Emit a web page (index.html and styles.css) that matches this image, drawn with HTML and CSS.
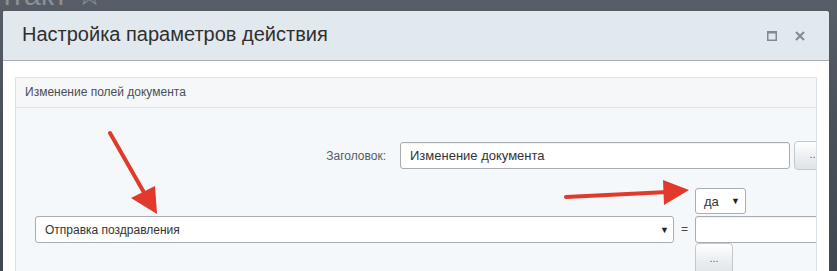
FILE: index.html
```html
<!DOCTYPE html>
<html lang="ru">
<head>
<meta charset="utf-8">
<title>Настройка параметров действия</title>
<link rel="stylesheet" href="styles.css">
</head>
<body>
<div class="backdrop"><span class="backdrop-text">нтакт ☆</span></div>
<div class="dialog">
  <div class="dialog-head">
    <div class="dialog-title">Настройка параметров действия</div>
    <div class="dialog-icons">
      <svg class="ico" width="10" height="10" viewBox="0 0 10 10"><rect x="0.75" y="0.75" width="8.5" height="8.5" fill="none" stroke="#7f8a95" stroke-width="1.5"/><line x1="0" y1="1.2" x2="10" y2="1.2" stroke="#7f8a95" stroke-width="2.4"/></svg>
      <svg class="ico" width="10" height="10" viewBox="0 0 10 10"><path d="M1 1 L9 9 M9 1 L1 9" stroke="#7f8a95" stroke-width="2" fill="none"/></svg>
    </div>
  </div>
  <div class="dialog-body">
    <div class="panel">
      <div class="panel-head">Изменение полей документа</div>
      <div class="panel-body">
        <div class="row1">
          <div class="label">Заголовок:</div>
          <div class="input wide">Изменение документа</div>
          <div class="btn btn-row1">...</div>
        </div>
        <div class="row2">
          <div class="select main"><span>Отправка поздравления</span><span class="caret">▼</span></div>
          <div class="eq">=</div>
          <div class="valcol">
            <div class="select small"><span>да</span><span class="caret">▼</span></div>
            <div class="input val"></div>
            <div class="btn btn-val">...</div>
          </div>
        </div>
      </div>
    </div>
  </div>
</div>
<svg class="arrows" width="837" height="271" viewBox="0 0 837 271">
  <line x1="110" y1="133" x2="146" y2="196" stroke="#e2392d" stroke-width="4" stroke-linecap="round"/>
  <polygon points="157,214 131,198 155,186" fill="#e2392d"/>
  <line x1="566" y1="197" x2="668" y2="192" stroke="#e2392d" stroke-width="4" stroke-linecap="round"/>
  <polygon points="689,190 663,180 664,205" fill="#e2392d"/>
</svg>
</body>
</html>
```
FILE: styles.css
```css
html, body {
  margin: 0;
  padding: 0;
}
body {
  width: 837px;
  height: 271px;
  overflow: hidden;
  background: linear-gradient(180deg, #585e67 0%, #4b525b 40%, #3f4750 100%);
  font-family: "Liberation Sans", Arial, sans-serif;
  position: relative;
}
.backdrop {
  height: 11px;
  overflow: hidden;
}
.backdrop-text {
  display: block;
  margin-top: -22px;
  margin-left: -6px;
  font-size: 30px;
  line-height: 34px;
  color: #8a9096;
  font-weight: 300;
}
.dialog {
  margin-left: 3px;
  width: 826px;
  height: 260px;
  background: #fff;
  border-radius: 2px 3px 0 0;
  overflow: hidden;
}
.dialog-head {
  height: 49px;
  background: #e2e9ee;
  border-bottom: 1px solid #a9afb4;
  display: flex;
  align-items: center;
  justify-content: space-between;
}
.dialog-title {
  padding-left: 19px;
  font-size: 20px;
  color: #2f2f2f;
  margin-top: -2px;
}
.dialog-icons {
  display: flex;
  gap: 18px;
  padding-right: 24px;
}
.ico {
  display: block;
}
.dialog-body {
  padding: 16px 13px 0 12px;
  background: #fff;
}
.panel {
  width: 800px;
  border: 1px solid #dde2e6;
  background: #f5f8fa;
  height: 200px;
  overflow: hidden;
}
.panel-head {
  height: 29px;
  border-bottom: 1px solid #dde2e6;
  background: #f5f7f9;
  font-size: 12px;
  color: #4a4f55;
  line-height: 28px;
  padding-left: 9px;
}
.panel-body {
  padding-top: 33px;
  background: #f5f8fa;
}
.row1 {
  display: flex;
  align-items: center;
  white-space: nowrap;
}
.label {
  width: 370px;
  flex: 0 0 370px;
  text-align: right;
  font-size: 12px;
  color: #555b62;
  padding-right: 14px;
}
.input {
  box-sizing: border-box;
  height: 27px;
  background: #fff;
  border: 1px solid #a7adb3;
  border-radius: 3px;
  box-shadow: inset 0 1px 1px rgba(0,0,0,0.06);
  font-size: 13px;
  color: #333;
  line-height: 25px;
  padding-left: 9px;
  flex: 0 0 auto;
}
.wide {
  width: 390px;
}
.btn {
  box-sizing: border-box;
  border: 1px solid #c3c8cd;
  border-radius: 4px;
  background: linear-gradient(180deg, #ffffff 0%, #e9edf0 60%, #dfe4e7 100%);
  color: #5c626a;
  font-size: 11px;
  text-align: center;
  flex: 0 0 auto;
}
.btn-row1 {
  margin-left: 4px;
  width: 40px;
  height: 29px;
  line-height: 25px;
}
.row2 {
  display: flex;
  align-items: flex-start;
  margin-top: 18px;
  padding-left: 19px;
  white-space: nowrap;
}
.select {
  box-sizing: border-box;
  background: #fff;
  border: 1px solid #a7adb3;
  border-radius: 3px;
  display: flex;
  justify-content: space-between;
  align-items: center;
  font-size: 12px;
  color: #333;
  flex: 0 0 auto;
}
.caret {
  font-size: 9px;
  color: #222;
}
.main {
  margin-top: 28px;
  width: 639px;
  height: 27px;
  padding: 0 4px 0 9px;
}
.eq {
  margin-top: 28px;
  width: 21px;
  text-align: center;
  line-height: 27px;
  font-size: 12px;
  color: #444;
  flex: 0 0 21px;
}
.valcol {
  display: flex;
  flex-direction: column;
  align-items: flex-start;
}
.small {
  width: 51px;
  height: 26px;
  padding: 0 5px 0 8px;
  margin-bottom: 2px;
  font-size: 13px;
}
.val {
  width: 140px;
  height: 27px;
}
.btn-val {
  width: 38px;
  height: 32px;
  line-height: 28px;
}
.arrows {
  position: absolute;
  left: 0;
  top: 0;
  pointer-events: none;
}
```
